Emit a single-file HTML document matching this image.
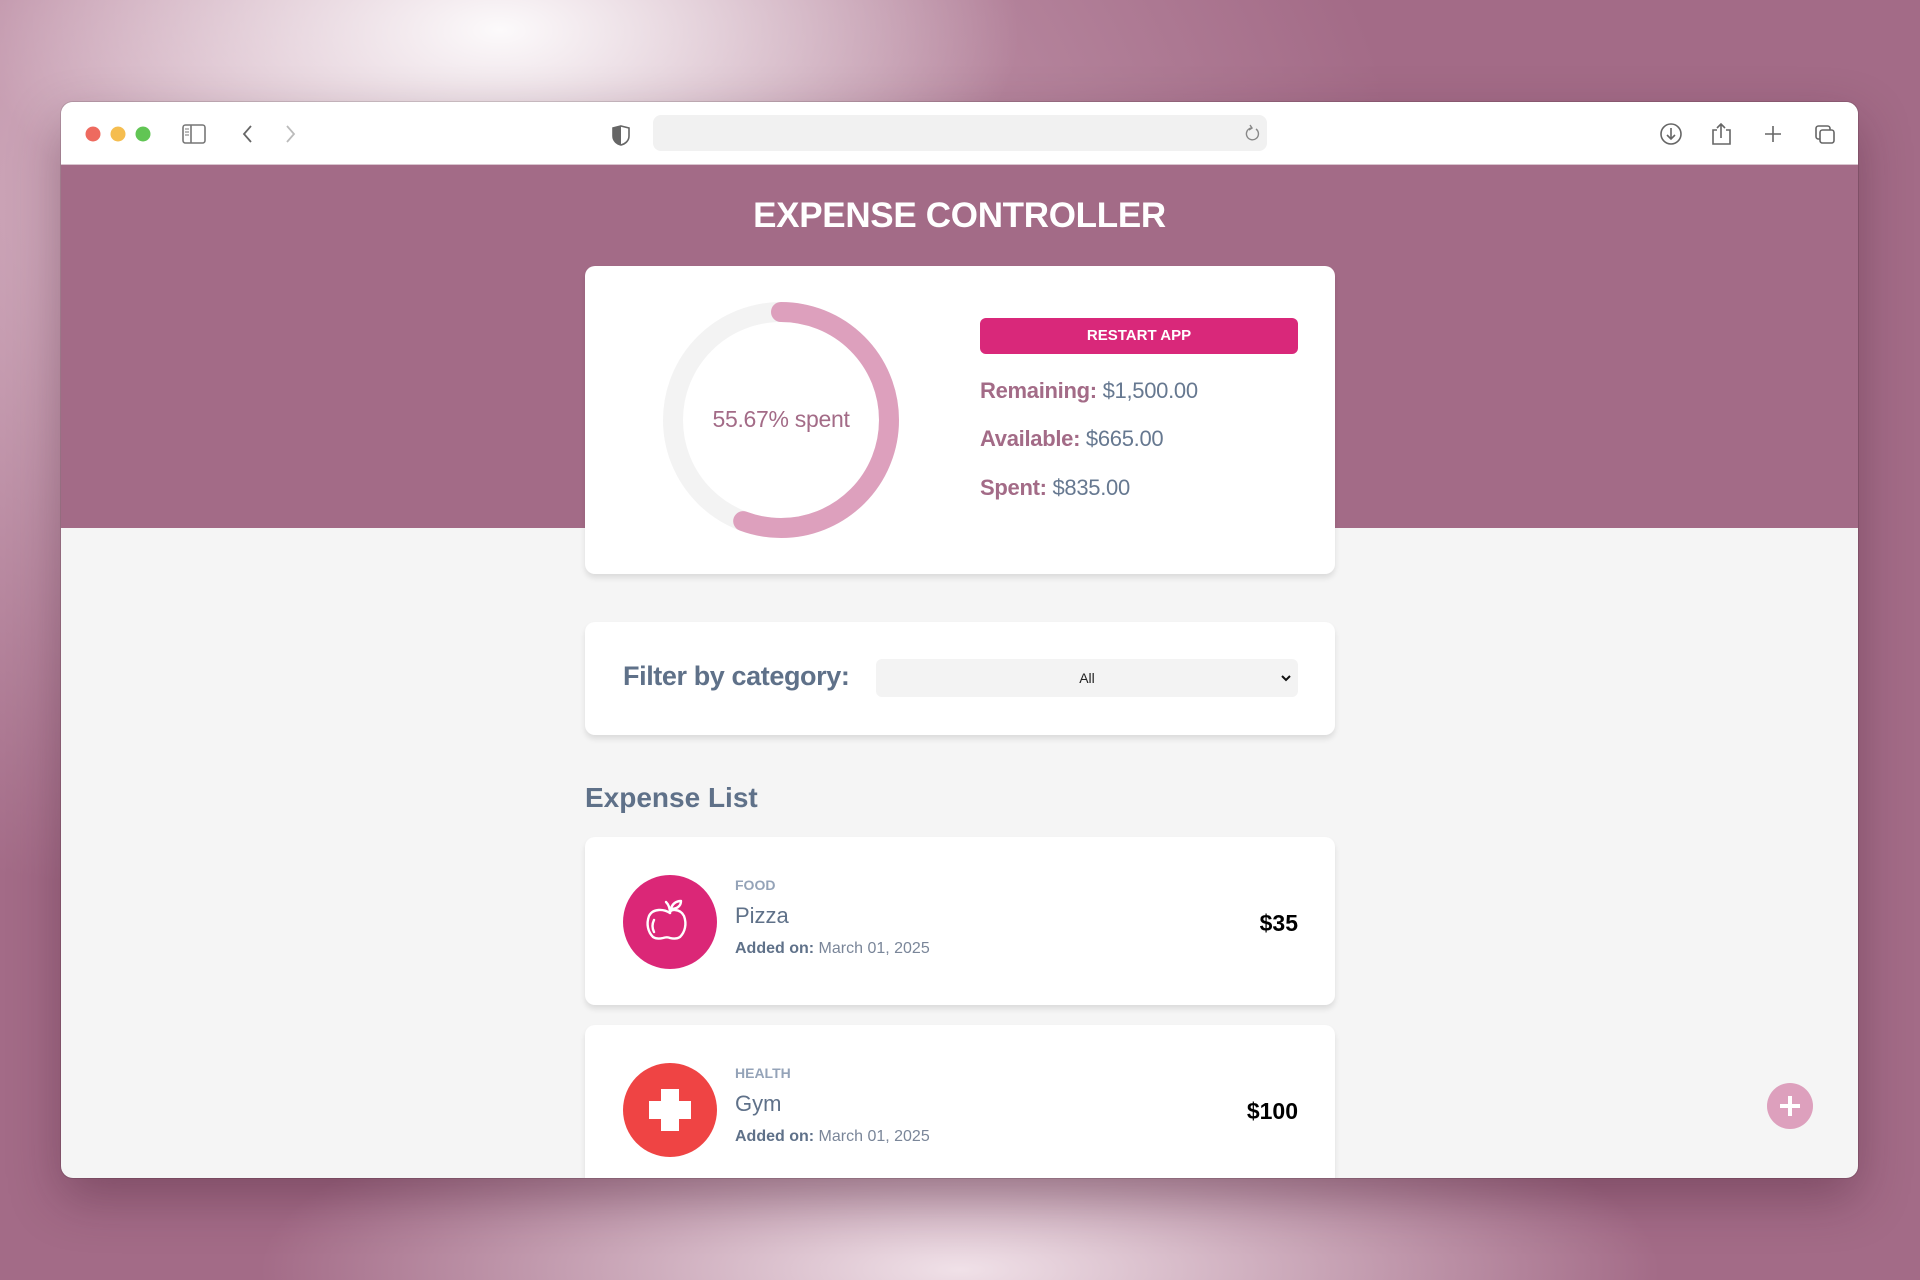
<!DOCTYPE html>
<html><head><meta charset="utf-8">
<style>
*{box-sizing:border-box;margin:0;padding:0}
html,body{width:1920px;height:1280px;overflow:hidden}
body{font-family:"Liberation Sans",sans-serif;position:relative;
background:
radial-gradient(ellipse 520px 260px at 500px 30px, rgba(255,255,255,0.95), rgba(255,255,255,0) 100%),
radial-gradient(ellipse 700px 200px at 960px 1270px, rgba(240,225,232,1), rgba(240,225,232,0) 100%),
radial-gradient(ellipse 1100px 700px at 300px 200px, #d8b6c6, rgba(216,182,198,0) 100%),
#a36b87;}
.win{position:absolute;left:61px;top:102px;width:1797px;height:1076px;border-radius:12px;overflow:hidden;background:#f5f5f5;box-shadow:0 20px 50px rgba(60,20,40,.35),0 0 0 1px rgba(0,0,0,.12)}
.bar{position:absolute;left:0;top:0;width:100%;height:63px;background:#fff;border-bottom:1px solid #d9c5cf}
.url{position:absolute;left:592px;top:13px;width:614px;height:36px;background:#f1f1f1;border-radius:8px}
.hdr{position:absolute;left:0;top:63px;width:100%;height:363px;background:#a36b87}
h1{position:absolute;left:0;width:100%;top:94px;text-align:center;color:#fff;font-size:35px;font-weight:700;letter-spacing:-0.3px}
.card{position:absolute;left:524px;width:750px;background:#fff;border-radius:10px;box-shadow:0 4px 6px rgba(0,0,0,.1)}
.btn{position:absolute;left:395px;top:52px;width:318px;height:36px;background:#d9287a;border-radius:6px;color:#fff;font-weight:700;font-size:15px;text-align:center;line-height:36px}
.stat{position:absolute;left:395px;font-size:22px;color:#667890;letter-spacing:-0.3px}
.stat b{color:#a36b87}
.lbl{position:absolute;left:38px;top:39px;font-size:27px;font-weight:700;color:#5f7189;letter-spacing:-0.4px}
.sel{position:absolute;left:291px;top:37px;width:422px;height:38px;background:#f3f3f3;border-radius:6px;font-size:14px;text-align:center;line-height:38px;color:#222}
.cat{position:absolute;left:150px;font-size:14px;font-weight:700;color:#94a3b8}
.nm{position:absolute;left:150px;font-size:22px;color:#5f7189}
.dt{position:absolute;left:150px;font-size:16px;color:#7a8699}
.dt b{color:#5f7189}
.amt{position:absolute;right:37px;font-size:23px;font-weight:700;color:#000}
.ic{position:absolute;left:38px;width:94px;height:94px;border-radius:50%}
</style></head><body>
<div class="win">
 <div class="bar">
  <svg width="1797" height="63" style="position:absolute;left:0;top:0">
   <circle cx="32" cy="32" r="7.5" fill="#ee6a5f"/><circle cx="57" cy="32" r="7.5" fill="#f5bd4f"/><circle cx="82" cy="32" r="7.5" fill="#61c554"/>
   <rect x="122" y="23" width="22" height="18" rx="2.5" fill="none" stroke="#777" stroke-width="1.6"/><line x1="130" y1="23" x2="130" y2="41" stroke="#777" stroke-width="1.6"/>
   <path d="M124 27h4M124 30h4M124 33h4" stroke="#777" stroke-width="1"/>
   <path d="M190 24l-7 8 7 8" fill="none" stroke="#666" stroke-width="1.8"/>
   <path d="M226 24l7 8-7 8" fill="none" stroke="#bbb" stroke-width="1.8"/>
   <path d="M560 24l8 2v8c0 5-4 8-8 9-4-1-8-4-8-9v-8z" fill="none" stroke="#666" stroke-width="1.6"/><path d="M560 24v19c-4-1-8-4-8-9v-8z" fill="#666"/>
   <circle cx="1610" cy="32" r="10" fill="none" stroke="#666" stroke-width="1.6"/><path d="M1610 26v11M1606 33l4 4 4-4" fill="none" stroke="#666" stroke-width="1.6"/>
   <path d="M1656 28h-4v14h17v-14h-4M1660 22v14M1656 26l4-4 4 4" fill="none" stroke="#666" stroke-width="1.6"/>
   <path d="M1712 24v16M1704 32h16" stroke="#666" stroke-width="1.6"/>
   <rect x="1755" y="24" width="14" height="13" rx="2.5" fill="none" stroke="#666" stroke-width="1.6"/><rect x="1759" y="28" width="14" height="13" rx="2.5" fill="#fff" stroke="#666" stroke-width="1.6"/>
  </svg>
  <div class="url"><svg width="20" height="20" style="position:absolute;right:4px;top:8px"><path d="M13 6a6 6 0 1 1-5-1" fill="none" stroke="#888" stroke-width="1.4"/><path d="M7 2l2 3-3 2" fill="none" stroke="#888" stroke-width="1.4"/></svg></div>
 </div>
 <div class="hdr"></div>
 <h1>EXPENSE CONTROLLER</h1>
 <div class="card" style="top:164px;height:308px">
  <svg width="260" height="260" style="position:absolute;left:66px;top:24px">
   <circle cx="130" cy="130" r="108" fill="none" stroke="#f3f3f3" stroke-width="20"/>
   <circle cx="130" cy="130" r="108" fill="none" stroke="#dda0bd" stroke-width="20" stroke-linecap="round" stroke-dasharray="377.8 1000" transform="rotate(-90 130 130)"/>
  </svg>
  <div style="position:absolute;left:66px;width:260px;top:140px;text-align:center;font-size:23px;color:#a36b87;letter-spacing:-0.3px">55.67% spent</div>
  <div class="btn">RESTART APP</div>
  <div class="stat" style="top:112px"><b>Remaining:</b> $1,500.00</div>
  <div class="stat" style="top:160px"><b>Available:</b> $665.00</div>
  <div class="stat" style="top:209px"><b>Spent:</b> $835.00</div>
 </div>
 <div class="card" style="top:520px;height:113px">
  <div class="lbl">Filter by category:</div>
  <div class="sel">All<svg width="10" height="8" style="position:absolute;right:7px;top:15px"><path d="M1 2l4 4 4-4" fill="none" stroke="#111" stroke-width="2"/></svg></div>
 </div>
 <div style="position:absolute;left:524px;top:680px;font-size:28px;font-weight:700;color:#5f7189">Expense List</div>
 <div class="card" style="top:735px;height:168px">
  <div class="ic" style="top:38px;background:#db2777">
   <svg width="94" height="94"><g fill="none" stroke="#fff" stroke-width="2.4" stroke-linejoin="round" stroke-linecap="round">
    <path d="M47 38c-6-4-17-5-21 3-3 8-1 16 4 21 3 2 6 2 10 1 3-1 5-1 7 0 4 1 7 1 10-1 5-5 7-13 4-21-4-8-15-7-14-3z"/>
    <path d="M47 38c0-4-1-8-4-11"/><path d="M48 34c1-5 5-8 10-8 0 5-4 8-10 8z"/>
    <path d="M31 45c-2 4-2 8 0 12"/></g></svg>
  </div>
  <div class="cat" style="top:40px">FOOD</div>
  <div class="nm" style="top:66px">Pizza</div>
  <div class="dt" style="top:103px"><b>Added on:</b> March 01, 2025</div>
  <div class="amt" style="top:73px">$35</div>
 </div>
 <div class="card" style="top:923px;height:200px">
  <div class="ic" style="top:38px;background:#ef4444">
   <svg width="94" height="94"><path d="M38 26h18v12h12v18H56v12H38V56H26V38h12z" fill="#fff"/></svg>
  </div>
  <div class="cat" style="top:40px">HEALTH</div>
  <div class="nm" style="top:66px">Gym</div>
  <div class="dt" style="top:103px"><b>Added on:</b> March 01, 2025</div>
  <div class="amt" style="top:73px">$100</div>
 </div>
 <svg width="48" height="48" style="position:absolute;left:1705px;top:980px">
  <circle cx="24" cy="24" r="23" fill="#dda0bd"/><path d="M24 14v20M14 24h20" stroke="#fff" stroke-width="4"/>
 </svg>
</div>
</body></html>
